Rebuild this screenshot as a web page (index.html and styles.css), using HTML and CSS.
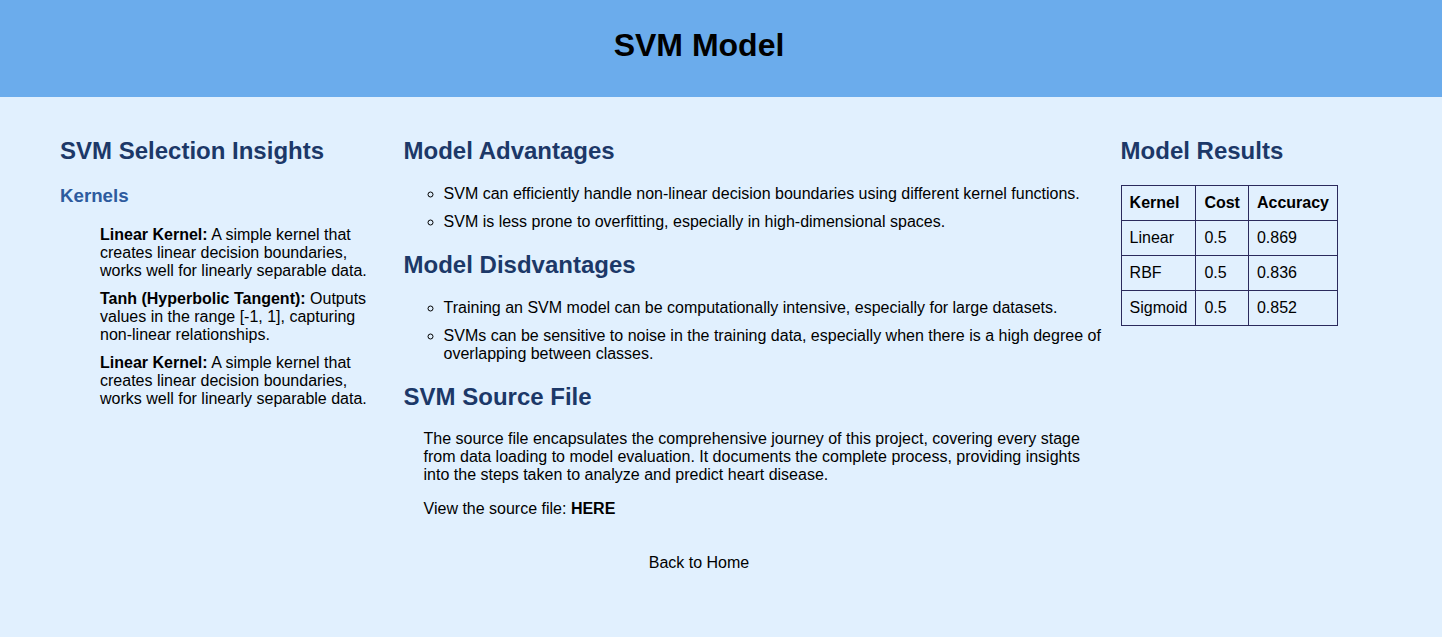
FILE: index.html
```html
<!DOCTYPE html>
<html lang="en">
<head>
<meta charset="utf-8">
<title>SVM Model</title>
<link rel="stylesheet" href="styles.css">
</head>
<body>
<header class="site-header">
  <h1 class="site-title">SVM Model</h1>
</header>
<main class="main">
  <section class="col col-left">
    <h2 class="section-title">SVM Selection Insights</h2>
    <h3 class="sub-title">Kernels</h3>
    <ul class="kernel-list">
      <li><strong>Linear Kernel:</strong> A simple kernel that creates linear decision boundaries, works well for linearly separable data.</li>
      <li><strong>Tanh (Hyperbolic Tangent):</strong> Outputs values in the range [-1, 1], capturing non-linear relationships.</li>
      <li><strong>Linear Kernel:</strong> A simple kernel that creates linear decision boundaries, works well for linearly separable data.</li>
    </ul>
  </section>
  <section class="col col-mid">
    <h2 class="section-title">Model Advantages</h2>
    <ul class="point-list">
      <li>SVM can efficiently handle non-linear decision boundaries using different kernel functions.</li>
      <li>SVM is less prone to overfitting, especially in high-dimensional spaces.</li>
    </ul>
    <h2 class="section-title">Model Disdvantages</h2>
    <ul class="point-list">
      <li>Training an SVM model can be computationally intensive, especially for large datasets.</li>
      <li>SVMs can be sensitive to noise in the training data, especially when there is a high degree of overlapping between classes.</li>
    </ul>
    <h2 class="section-title">SVM Source File</h2>
    <div class="source">
      <p>The source file encapsulates the comprehensive journey of this project, covering every stage from data loading to model evaluation. It documents the complete process, providing insights into the steps taken to analyze and predict heart disease.</p>
      <p>View the source file: <a class="here-link" href="#">HERE</a></p>
    </div>
  </section>
  <section class="col col-right">
    <h2 class="section-title">Model Results</h2>
    <table class="results">
      <thead>
        <tr><th>Kernel</th><th>Cost</th><th>Accuracy</th></tr>
      </thead>
      <tbody>
        <tr><td>Linear</td><td>0.5</td><td>0.869</td></tr>
        <tr><td>RBF</td><td>0.5</td><td>0.836</td></tr>
        <tr><td>Sigmoid</td><td>0.5</td><td>0.852</td></tr>
      </tbody>
    </table>
  </section>
</main>
<footer class="site-footer">
  <a class="home-link" href="#">Back to Home</a>
</footer>
</body>
</html>
```
FILE: styles.css
```css
html, body {
  margin: 0;
  padding: 0;
}
body {
  background: #e1f0fe;
  font-family: "Liberation Sans", Arial, sans-serif;
  font-size: 16px;
  color: #000;
  min-height: 637px;
}
.site-header {
  background: #6bacec;
  padding: 27px 44px 33px 0;
  text-align: center;
}
.site-title {
  margin: 0;
  font-size: 32px;
  font-weight: bold;
}
.main {
  display: flex;
  align-items: flex-start;
  padding: 20px 104px 0 60px;
}
.col-left {
  width: 320px;
  margin-right: 24px;
}
.col-mid {
  width: 700px;
  margin-right: 18px;
}
.col-right {
  flex: 1;
}
.section-title {
  font-size: 24px;
  margin: 19.92px 0;
  color: #1c3868;
}
.sub-title {
  font-size: 18.72px;
  margin: 18.72px 0;
  color: #2d5b9e;
}
.kernel-list {
  list-style: none;
  margin: 16px 0;
  padding-left: 40px;
}
.kernel-list li,
.point-list li {
  margin-bottom: 10px;
}
.point-list {
  list-style: circle;
  margin: 16px 0;
  padding-left: 40px;
}
.source {
  padding-left: 20px;
}
.source p {
  margin: 16px 0;
}
.here-link {
  color: #000;
  font-weight: bold;
  text-decoration: none;
}
.results {
  border-collapse: collapse;
}
.results th,
.results td {
  border: 1px solid #2b2a5c;
  padding: 8px;
  text-align: left;
}
.results th {
  font-weight: bold;
}
.site-footer {
  text-align: center;
  padding-right: 44px;
  margin-top: 20px;
}
.home-link {
  color: #000;
  text-decoration: none;
}
```
